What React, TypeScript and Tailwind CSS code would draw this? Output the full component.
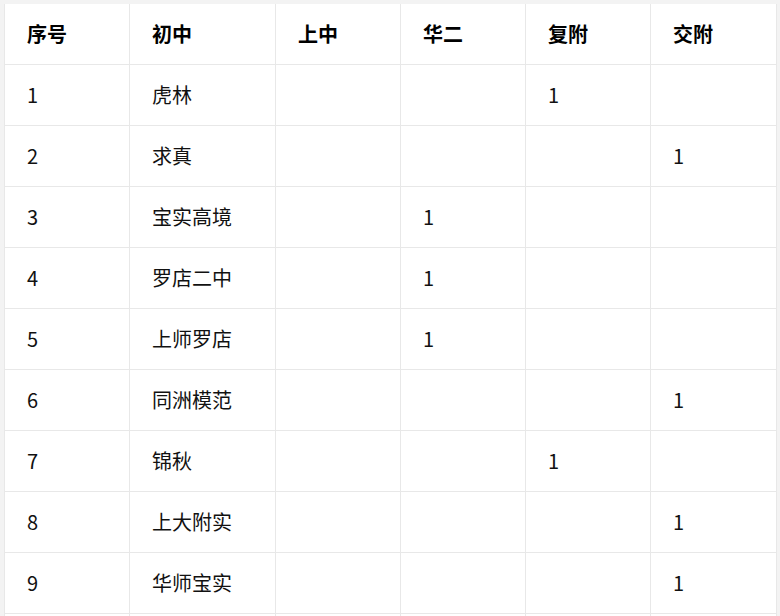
import React from "react";

const headers = ["序号", "初中", "上中", "华二", "复附", "交附"];
const rows: string[][] = [
  ["1", "虎林", "", "", "1", ""],
  ["2", "求真", "", "", "", "1"],
  ["3", "宝实高境", "", "1", "", ""],
  ["4", "罗店二中", "", "1", "", ""],
  ["5", "上师罗店", "", "1", "", ""],
  ["6", "同洲模范", "", "", "", "1"],
  ["7", "锦秋", "", "", "1", ""],
  ["8", "上大附实", "", "", "", "1"],
  ["9", "华师宝实", "", "", "", "1"],
  ["", "", "", "", "", ""],
];

const widths = ["w-[125px]", "w-[146px]", "w-[125px]", "w-[125px]", "w-[125px]", "w-[126px]"];

export default function App() {
  return (
    <div
      className="w-[780px] h-[616px] overflow-hidden bg-[#f3f3f3] pt-[4px] pl-[4px] pr-[4px]"
      style={{ fontFamily: '"Noto Sans CJK SC", "Microsoft YaHei", sans-serif' }}
    >
      <table className="border-collapse bg-white text-[#111] table-fixed w-[772px]">
        <colgroup>
          {widths.map((w, i) => (
            <col key={i} className={w} />
          ))}
        </colgroup>
        <thead>
          <tr className="h-[60px]">
            {headers.map((h, i) => (
              <th
                key={i}
                className="border border-[#e8e8e8] border-t-0 pl-[22px] text-left align-middle text-[20px] leading-[24px] font-bold text-black"
              >
                {h}
              </th>
            ))}
          </tr>
        </thead>
        <tbody>
          {rows.map((r, ri) => (
            <tr key={ri} className="h-[61px]">
              {r.map((c, ci) => (
                <td
                  key={ci}
                  className="border border-[#e8e8e8] pl-[22px] text-left align-middle text-[20px] leading-[24px] text-[#111]"
                >
                  {c}
                </td>
              ))}
            </tr>
          ))}
        </tbody>
      </table>
    </div>
  );
}
